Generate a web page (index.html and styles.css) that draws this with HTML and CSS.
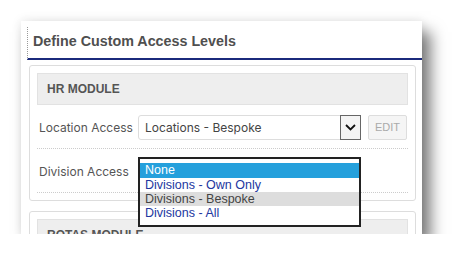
FILE: index.html
```html
<!DOCTYPE html>
<html>
<head>
    <title>Define Custom Access Levels</title>
    <link rel="stylesheet" href="styles.css">
</head>
<body>
    <div class="page">
        <div class="card">
            <h1 class="card-title">Define Custom Access Levels</h1>

            <div class="module">
                <div class="module-head">HR MODULE</div>
                <div class="field-row">
                    <label class="field-label">Location Access</label>
                    <div class="select-box">
                        <span class="select-value">Locations - Bespoke</span>
                        <span class="select-arrow">
                            <svg width="11" height="7" viewBox="0 0 11 7"><path d="M1 1 L5.5 5.5 L10 1" fill="none" stroke="#111" stroke-width="1.8"/></svg>
                        </span>
                    </div>
                    <a href="#" class="edit-btn">EDIT</a>
                </div>
                <div class="field-row">
                    <label class="field-label">Division Access</label>
                    <div class="select-slot">
                        <ul class="option-list">
                            <li class="option selected">None</li>
                            <li class="option">Divisions - Own Only</li>
                            <li class="option hover">Divisions - Bespoke</li>
                            <li class="option">Divisions - All</li>
                        </ul>
                    </div>
                </div>
            </div>

            <div class="module">
                <div class="module-head">ROTAS MODULE</div>
            </div>
        </div>
    </div>
</body>
</html>
```

FILE: styles.css
```css
body {
    margin: 0;
    background-color: #fff;
    font-family: Inter, "Noto Sans", Arial, sans-serif;
}

.page {
    padding: 21px 42px 0 21px;
}

.card {
    height: 213px;
    overflow: hidden;
    background-color: #fff;
    padding-left: 6px;
    box-sizing: border-box;
    box-shadow: 9px 11px 14px rgba(0, 0, 0, 0.5), 0 0 10px rgba(0, 0, 0, 0.1);
}

.card-title {
    margin: 6px 0 0 0;
    height: 31px;
    padding-left: 5px;
    border-left: 1px dotted #999;
    border-bottom: 2px solid #1b2a7c;
    font-family: "Liberation Sans", Arial, sans-serif;
    font-size: 14.3px;
    font-weight: bold;
    line-height: 28px;
    color: #4f4f4f;
}

.module {
    margin: 5px 6px 0 2px;
    padding: 7px 7px;
    border: 1px solid #ddd;
    border-radius: 3px;
}

.module + .module {
    margin-top: 10px;
}

.module-head {
    height: 32px;
    padding-left: 9px;
    background-color: #eee;
    border: 1px solid #e2e2e2;
    box-sizing: border-box;
    font-family: "Liberation Sans", Arial, sans-serif;
    font-size: 12px;
    font-weight: bold;
    line-height: 31px;
    color: #555;
}

.field-row {
    display: flex;
    align-items: center;
    height: 41px;
    padding-top: 2px;
    border-bottom: 1px dotted #ccc;
    position: relative;
}

.field-label {
    width: 101px;
    padding-left: 2px;
    box-sizing: border-box;
    font-size: 12px;
    color: #555;
}

.select-box {
    display: flex;
    align-items: stretch;
    width: 223px;
    height: 25px;
    border: 1px solid #ddd;
    border-radius: 3px 0 0 3px;
    box-sizing: border-box;
}

.select-value {
    flex: 1;
    padding-left: 6px;
    font-size: 12px;
    line-height: 23px;
    color: #444;
}

.select-arrow {
    display: flex;
    align-items: center;
    justify-content: center;
    width: 19px;
    margin: -1px -1px -1px 0;
    border: 1px solid #666;
    background-color: #f4f4f4;
}

.edit-btn {
    width: 39px;
    height: 25px;
    margin-left: 7px;
    background-color: #f5f5f5;
    border: 1px solid #ddd;
    border-radius: 2px;
    box-sizing: border-box;
    font-family: "Liberation Sans", Arial, sans-serif;
    font-size: 11px;
    line-height: 23px;
    text-align: center;
    color: #aaa;
    text-decoration: none;
}

.select-slot {
    width: 223px;
    height: 25px;
}

.option-list {
    position: absolute;
    top: 8px;
    left: 101px;
    width: 223px;
    height: 70px;
    margin: 0;
    padding: 4px 0 0 0;
    list-style-type: none;
    background-color: #fff;
    border: 2px solid #222;
    box-sizing: border-box;
    z-index: 2;
}

.option {
    height: 14px;
    padding-left: 5px;
    font-family: "Liberation Sans", Arial, sans-serif;
    font-size: 12.5px;
    line-height: 14px;
    color: #2337a0;
}

.option.selected {
    height: 15px;
    line-height: 15px;
    background-color: #25a0dc;
    color: #fff;
}

.option.hover {
    background-color: #ddd;
    color: #444;
}
```
